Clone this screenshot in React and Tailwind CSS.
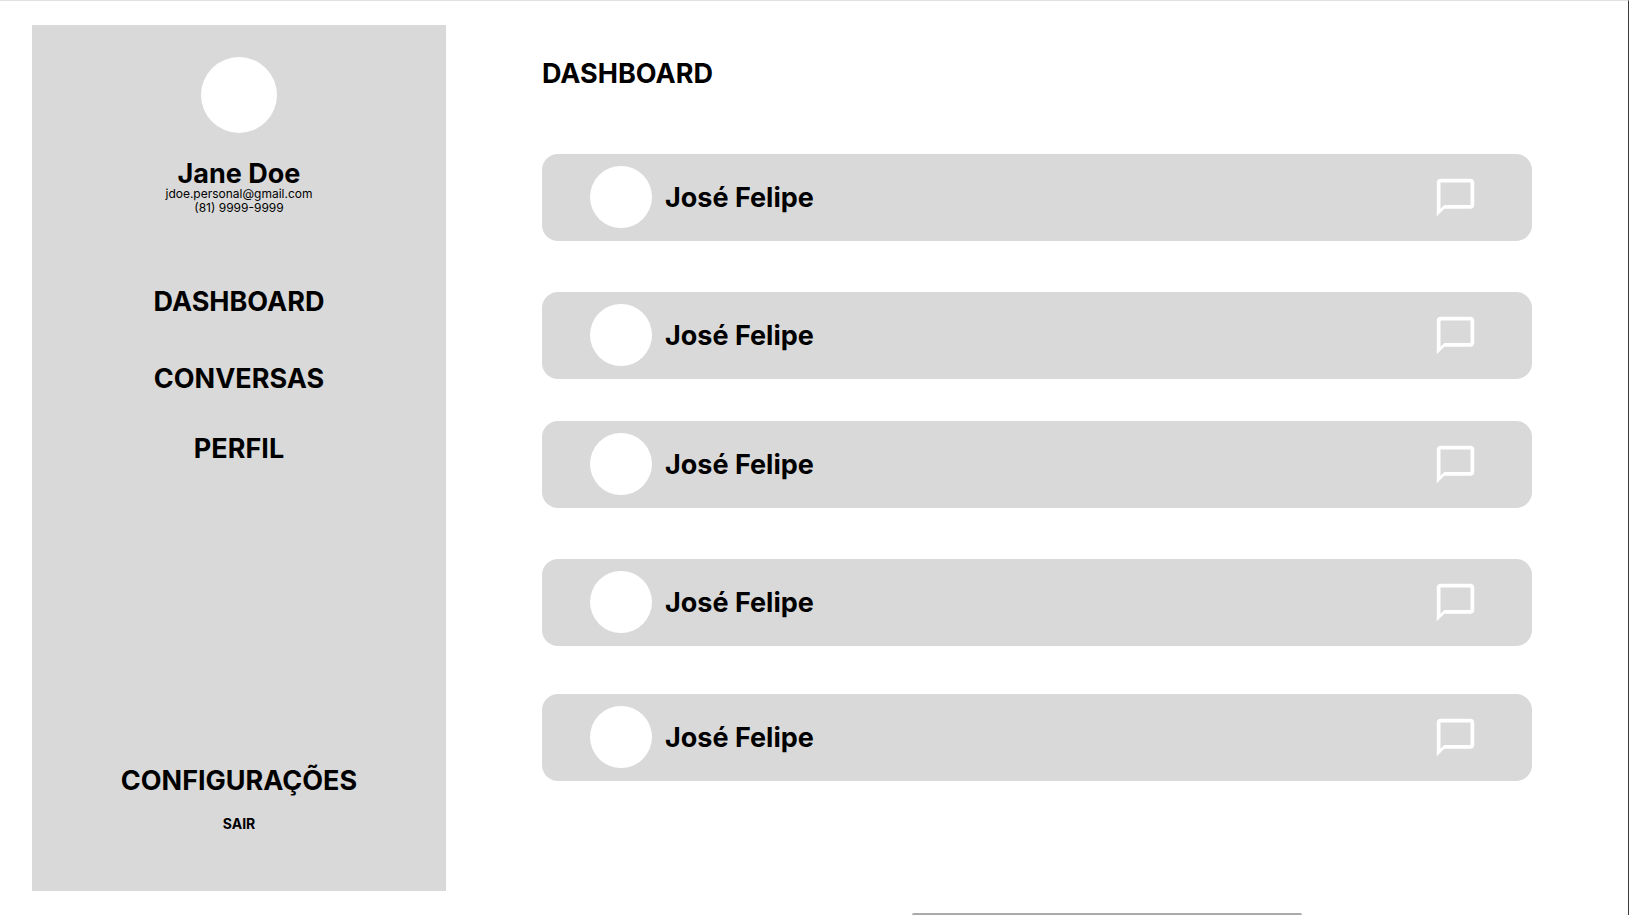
const contacts = [
  { id: 1, name: "José Felipe", spacing: "" },
  { id: 2, name: "José Felipe", spacing: "mt-[51px]" },
  { id: 3, name: "José Felipe", spacing: "mt-[42px]" },
  { id: 4, name: "José Felipe", spacing: "mt-[51px]" },
  { id: 5, name: "José Felipe", spacing: "mt-12" },
];

function ChatIcon() {
  return (
    <svg viewBox="0 0 24 24" className="size-[45px]" fill="currentColor" aria-hidden="true">
      <path d="M20 2H4c-1.1 0-2 .9-2 2v18l4-4h14c1.1 0 2-.9 2-2V4c0-1.1-.9-2-2-2zm0 14H6l-2 2V4h16v12z" />
    </svg>
  );
}

function Sidebar() {
  return (
    <aside className="flex w-[414px] shrink-0 flex-col items-center bg-[#d9d9d9] pt-8 pb-[57px]">
      <div className="size-[76px] rounded-full bg-white" />
      <h2 className="mt-7 text-[27px] leading-[26px] font-bold">Jane Doe</h2>
      <p className="text-xs leading-[14px]">jdoe.personal@gmail.com</p>
      <p className="text-xs leading-[14px]">(81) 9999-9999</p>
      <nav className="mt-[74px] flex flex-col items-center text-[27px] leading-[26px] font-bold">
        <a href="#dashboard">DASHBOARD</a>
        <a href="#conversas" className="mt-[51px]">CONVERSAS</a>
        <a href="#perfil" className="mt-11">PERFIL</a>
      </nav>
      <div className="mt-auto flex flex-col items-center font-bold">
        <a href="#configuracoes" className="text-[27px] leading-[26px]">CONFIGURAÇÕES</a>
        <button type="button" className="mt-5 text-sm leading-5">SAIR</button>
      </div>
    </aside>
  );
}

function ContactCard({ name, spacing }) {
  return (
    <li className={`flex h-[87px] items-center rounded-2xl bg-[#d9d9d9] pr-[54px] pb-px pl-12 ${spacing}`}>
      <div className="size-[62px] shrink-0 rounded-full bg-white" />
      <span className="ml-[13px] text-[27px] leading-[27px] font-bold">{name}</span>
      <button type="button" aria-label={`Conversar com ${name}`} className="ml-auto text-white">
        <ChatIcon />
      </button>
    </li>
  );
}

export default function App() {
  return (
    <div className="relative flex min-h-screen border-t border-r border-t-[#e1e1e1] border-r-[#3a3a3a] bg-white py-6 pl-8 font-['Inter',sans-serif] text-black">
      <Sidebar />
      <main className="min-w-0 flex-1 pt-9 pr-24 pl-24">
        <h1 className="text-[27px] leading-[26px] font-bold">DASHBOARD</h1>
        <ul className="mt-[67px]">
          {contacts.map((contact) => (
            <ContactCard key={contact.id} name={contact.name} spacing={contact.spacing} />
          ))}
        </ul>
      </main>
      <div className="absolute bottom-0 left-[56%] h-0.5 w-[24%] rounded-t-sm bg-[#aaaaaa]" />
    </div>
  );
}
